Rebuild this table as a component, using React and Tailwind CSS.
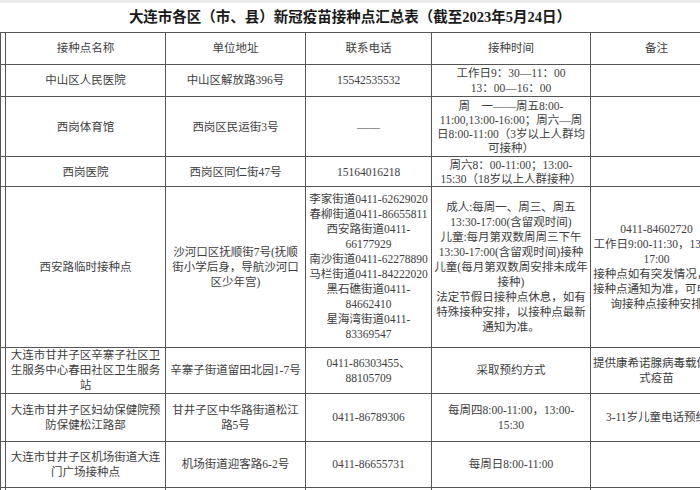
const rows = [
  {
    h: "h-[32px]",
    cells: [
      "中山区人民医院",
      "中山区解放路396号",
      "15542535532",
      ["工作日9：30—11：00", "13：00—16：00"],
      "",
    ],
  },
  {
    h: "h-[60px]",
    lh: "leading-[14px]",
    cells: [
      "西岗体育馆",
      "西岗区民运街3号",
      "——",
      ["周　一——周五8:00-", "11:00,13:00-16:00；周六—周", "日8:00-11:00（3岁以上人群均", "可接种）"],
      "",
    ],
  },
  {
    h: "h-[30px]",
    lh: "leading-[14px]",
    cells: [
      "西岗医院",
      "西岗区同仁街47号",
      "15164016218",
      ["周六8：00-11:00；13:00-", "15:30（18岁以上人群接种）"],
      "",
    ],
  },
  {
    h: "h-[161px]",
    cells: [
      "西安路临时接种点",
      ["沙河口区抚顺街7号(抚顺", "街小学后身，导航沙河口", "区少年宫)"],
      [
        "李家街道0411-62629020",
        "春柳街道0411-86655811",
        "西安路街道0411-",
        "66177929",
        "南沙街道0411-62278890",
        "马栏街道0411-84222020",
        "黑石礁街道0411-",
        "84662410",
        "星海湾街道0411-",
        "83369547",
      ],
      [
        "成人:每周一、周三、周五",
        "13:30-17:00(含留观时间)",
        "儿童:每月第双数周周三下午",
        "13:30-17:00(含留观时间)接种",
        "儿童(每月第双数周安排未成年",
        "接种)",
        "法定节假日接种点休息，如有",
        "特殊接种安排，以接种点最新",
        "通知为准。",
      ],
      [
        "0411-84602720",
        "工作日9:00-11:30，13:00-",
        "17:00",
        "接种点如有突发情况，以",
        "接种点通知为准，可电话咨",
        "询接种点接种安排",
      ],
    ],
  },
  {
    h: "h-[46px]",
    cells: [
      ["大连市甘井子区辛寨子社区卫", "生服务中心春田社区卫生服务", "站"],
      "辛寨子街道留田北园1-7号",
      ["0411-86303455、", "88105709"],
      "采取预约方式",
      ["提供康希诺腺病毒载体吸入", "式疫苗"],
    ],
  },
  {
    h: "h-[48px]",
    cells: [
      ["大连市甘井子区妇幼保健院预", "防保健松江路部"],
      ["甘井子区中华路街道松江", "路5号"],
      "0411-86789306",
      ["每周四8:00-11:00，13:00-", "15:30"],
      "3-11岁儿童电话预约",
    ],
  },
  {
    h: "h-[46px]",
    cells: [
      ["大连市甘井子区机场街道大连", "门广场接种点"],
      "机场街道迎客路6-2号",
      "0411-86655731",
      "每周日8:00-11:00",
      "",
    ],
  },
];

const Cell = ({ value, lh }) => (
  <td className={`border border-[#555] px-[2px] text-center align-middle ${lh || "leading-[15px]"}`}>
    {Array.isArray(value)
      ? value.map((line, i) => (
          <div key={i} className="whitespace-nowrap">
            {line}
          </div>
        ))
      : <span className="whitespace-nowrap">{value}</span>}
  </td>
);

export default function App() {
  return (
    <div
      className="w-[700px] h-[490px] overflow-hidden bg-white text-[#3d3d3d]"
      style={{ fontFamily: '"Liberation Serif", "Noto Sans CJK SC", serif' }}
    >
      <div className="h-[3px] bg-[#ececec]" />
      <div className="h-[29px] flex items-center justify-center text-[14.5px] font-bold text-[#1a1a1a] whitespace-nowrap">
        大连市各区（市、县）新冠疫苗接种点汇总表（截至2023年5月24日）
      </div>
      <table className="table-fixed border-collapse w-[722px] text-[11.5px]">
        <colgroup>
          <col className="w-[5px]" />
          <col className="w-[160px]" />
          <col className="w-[140px]" />
          <col className="w-[126px]" />
          <col className="w-[159px]" />
          <col className="w-[132px]" />
        </colgroup>
        <tbody>
          <tr className="h-[32px]">
            <td className="border border-[#555]" />
            {["接种点名称", "单位地址", "联系电话", "接种时间", "备注"].map((t) => (
              <Cell key={t} value={t} />
            ))}
          </tr>
          {rows.map((r, i) => (
            <tr key={i} className={r.h}>
              <td className="border border-[#555]" />
              {r.cells.map((c, j) => (
                <Cell key={j} value={c} lh={r.lh} />
              ))}
            </tr>
          ))}
          <tr className="h-[30px]">
            <td className="border border-[#555]" />
            <td className="border border-[#555]" />
            <td className="border border-[#555]" />
            <td className="border border-[#555]" />
            <td className="border border-[#555]" />
            <td className="border border-[#555]" />
          </tr>
        </tbody>
      </table>
    </div>
  );
}
